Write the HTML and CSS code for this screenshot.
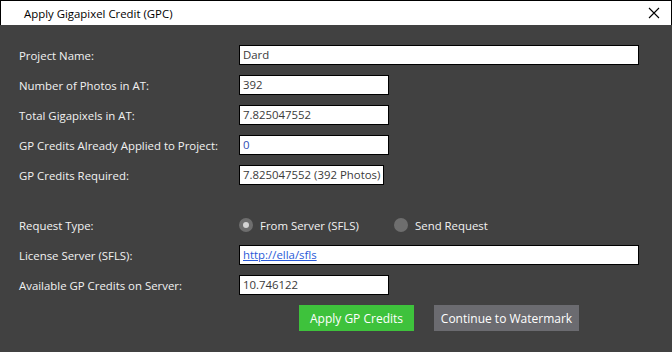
FILE: index.html
```html
<!DOCTYPE html>
<html lang="en">
<head>
    <meta charset="UTF-8">
    <meta name="viewport" content="width=device-width, initial-scale=1.0">
    <title>Apply Gigapixel Credit (GPC)</title>
    <link rel="stylesheet" href="styles.css">
</head>
<body>
    <div class="window">
        <div class="titlebar">
            <span class="title">Apply Gigapixel Credit (GPC)</span>
            <svg class="close" width="12" height="12" viewBox="0 0 12 12">
                <path d="M1 1 L11 11 M11 1 L1 11" stroke="#000" stroke-width="1.1" fill="none"/>
            </svg>
        </div>
        <div class="content">
            <div class="form">
                <div class="row">
                    <label>Project Name:</label>
                    <div class="field wide">Dard</div>
                </div>
                <div class="row">
                    <label>Number of Photos in AT:</label>
                    <div class="field">392</div>
                </div>
                <div class="row">
                    <label>Total Gigapixels in AT:</label>
                    <div class="field">7.825047552</div>
                </div>
                <div class="row">
                    <label>GP Credits Already Applied to Project:</label>
                    <div class="field blue">0</div>
                </div>
                <div class="row">
                    <label>GP Credits Required:</label>
                    <div class="field auto">7.825047552 (392 Photos)</div>
                </div>
            </div>
            <div class="form second">
                <div class="row">
                    <label>Request Type:</label>
                    <div class="radios">
                        <span class="radio checked"><span class="dot"></span>From Server (SFLS)</span>
                        <span class="radio"><span class="dot"></span>Send Request</span>
                    </div>
                </div>
                <div class="row">
                    <label>License Server (SFLS):</label>
                    <div class="field wide"><a href="#">http://ella/sfls</a></div>
                </div>
                <div class="row">
                    <label>Available GP Credits on Server:</label>
                    <div class="field">10.746122</div>
                </div>
            </div>
            <div class="actions">
                <button class="btn green">Apply GP Credits</button>
                <button class="btn gray">Continue to Watermark</button>
            </div>
        </div>
    </div>
</body>
</html>
```

FILE: styles.css
```css
body {
    margin: 0;
    padding: 0;
    font-family: "Open Sans", "Noto Sans", sans-serif;
    font-size: 11.4px;
    background-color: #414141;
}
.window {
    width: 672px;
    height: 352px;
    background: #414141;
}
.titlebar {
    height: 24px;
    background: #fff;
    border: 1px solid #000;
    border-bottom: none;
    display: flex;
    align-items: center;
    justify-content: space-between;
    padding: 0 11px 0 23px;
    color: #000;
}
.content {
    padding: 15px 0 0 19px;
}
.form {
    display: flex;
    flex-direction: column;
}
.second {
    margin-top: 20px;
}
.row {
    height: 30px;
    display: flex;
    align-items: center;
}
label {
    width: 220px;
    color: #f2f2f2;
}
.field {
    box-sizing: border-box;
    height: 20px;
    width: 150px;
    background: #fff;
    border: 1px solid #000;
    padding: 0 3px;
    color: #3a3a3a;
    line-height: 18px;
    white-space: nowrap;
}
.wide {
    width: 400px;
}
.auto {
    width: auto;
}
.blue {
    color: #2f4cb3;
}
.field a {
    color: #2a5ad8;
}
.radios {
    display: flex;
}
.radio {
    display: flex;
    align-items: center;
    gap: 7px;
    color: #f2f2f2;
}
.radio:first-child {
    width: 155px;
}
.dot {
    width: 14px;
    height: 14px;
    border-radius: 50%;
    background: #6e6e6e;
    position: relative;
}
.checked .dot::after {
    content: "";
    position: absolute;
    left: 4px;
    top: 4px;
    width: 6px;
    height: 6px;
    border-radius: 50%;
    background: #d4d4d4;
}
.actions {
    margin: 5px 0 0 280px;
    display: flex;
    gap: 20px;
}
.btn {
    height: 26px;
    border: none;
    font-family: inherit;
    font-size: 12px;
    color: #fff;
    padding: 0;
    white-space: nowrap;
}
.green {
    width: 115px;
    background: #3ec23c;
}
.gray {
    width: 145px;
    background: #6b6b70;
}
```
